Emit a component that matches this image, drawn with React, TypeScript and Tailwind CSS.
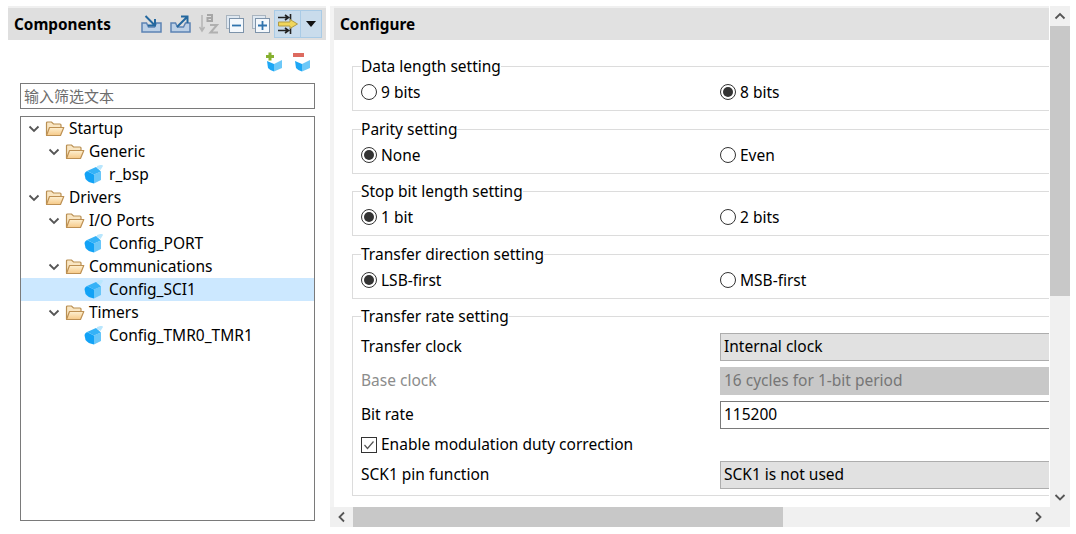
const sans = "font-['Noto_Sans','Noto_Sans_CJK_SC',sans-serif]";

function Chevron() {
  return (
    <svg width="12" height="12" viewBox="0 0 12 12" className="shrink-0">
      <path d="M1.5 3.5 L6 8 L10.5 3.5" fill="none" stroke="#555" strokeWidth="1.8" />
    </svg>
  );
}

function Folder() {
  return (
    <svg width="20" height="16" viewBox="0 0 20 16" className="shrink-0">
      <defs>
        <linearGradient id="folderFront" x1="0" y1="0" x2="0" y2="1">
          <stop offset="0" stopColor="#fdf0d2" />
          <stop offset="1" stopColor="#f6c987" />
        </linearGradient>
      </defs>
      <path d="M1.5 14 V2 Q1.5 1 2.5 1 H6.5 L8.5 3 H15 Q16 3 16 4 V6" fill="#f9e6c3" stroke="#b98f52" strokeWidth="1.2" />
      <path d="M1.5 14.5 L4.5 6.5 H18.8 L15.5 14.5 Z" fill="url(#folderFront)" stroke="#bd9053" strokeWidth="1.2" strokeLinejoin="round" />
    </svg>
  );
}

function Cube() {
  return (
    <svg width="20" height="20" viewBox="0 1 20 20" className="shrink-0">
      <path d="M0.5 10 Q1 8 3 7 L10 10.5 V19.5 Q4 18.5 1.5 15 Z" fill="#12a2f6" />
      <path d="M10 10.5 L17 7.5 V16 L10 19.5 Z" fill="#68c6f9" />
      <path d="M3 7 L12 3 L17 7.5 L10 10.5 Z" fill="#35b2f7" />
      <path d="M13 2 L18 0.5 L19 2 L16.5 6 L13 4 Z" fill="#b9e6fd" />
    </svg>
  );
}

function Tray({ up }: { up?: boolean }) {
  return (
    <svg width="21" height="18" viewBox="0 0 21 18" className="shrink-0">
      <path d="M1 8 V17 H20 V8 H15.5 L13.5 12 H7.5 L5.5 8 Z" fill="#bcd0e6" stroke="#5c83b4" strokeWidth="1.5" />
      {up ? (
        <path d="M7 12 L16.5 2.5 M11 1.5 H17.5 V8" fill="none" stroke="#24689f" strokeWidth="2" />
      ) : (
        <path d="M4.5 1 L13 9.5 M7 10.5 H14 V4" fill="none" stroke="#24689f" strokeWidth="2" />
      )}
    </svg>
  );
}

function SortAz() {
  return (
    <svg width="20" height="22" viewBox="0 0 20 22" className="shrink-0">
      <path d="M3 2 V17 M0.5 14 L3 18 L5.5 14" fill="none" stroke="#b5b5b5" strokeWidth="1.5" />
      <path d="M8 2 H13 V8 H8.5 V5 H13" fill="none" stroke="#a6a6a6" strokeWidth="2" />
      <path d="M11 12 H18 L11.5 19.5 H19" fill="none" stroke="#b0b0b0" strokeWidth="2" />
    </svg>
  );
}

function Stacked({ plus }: { plus?: boolean }) {
  return (
    <svg width="18" height="18" viewBox="0 0 18 18" className="shrink-0">
      <rect x="0.5" y="0.5" width="13" height="13" fill="#dfe8f1" stroke="#a9b4bf" />
      <rect x="3.5" y="3.5" width="14" height="14" fill="#f4f8fc" stroke="#7d93aa" />
      <path d={plus ? "M6 10.5 H15 M10.5 6 V15" : "M6 10.5 H15"} stroke="#2f73ad" strokeWidth="1.8" />
    </svg>
  );
}

function Sync() {
  return (
    <svg width="20" height="20" viewBox="0 0 20 20">
      <path d="M0 3.5 H10 M7 1 L10.5 3.5 L7 6 M12.5 0 V6" fill="none" stroke="#222" strokeWidth="1.6" />
      <path d="M0 16.5 H10 M7 14 L10.5 16.5 L7 19 M12.5 14 V20" fill="none" stroke="#222" strokeWidth="1.6" />
      <path d="M0.5 8 H12 V5.5 L19.5 10 L12 14.5 V12 H0.5 Z" fill="#f0d65a" stroke="#b09a45" strokeWidth="1" />
    </svg>
  );
}

function ComponentAction({ plus }: { plus?: boolean }) {
  return (
    <svg width="20" height="20" viewBox="0 0 20 20" className="shrink-0">
      <path d="M3 9 L10 12 V19.5 Q6 18.5 4 16 Z" fill="#1ea7f5" />
      <path d="M10 12 L18 8 V16 L10 19.5 Z" fill="#6cc8f8" />
      {plus ? (
        <path d="M6 0.5 V8.5 M2 4.5 H10" stroke="#86b02f" strokeWidth="3" />
      ) : (
        <rect x="1" y="1" width="11" height="4" fill="#dd6a5f" />
      )}
    </svg>
  );
}

type Row = { label: string; depth: number; kind: "folder" | "cube"; selected?: boolean };

const rows: Row[] = [
  { label: "Startup", depth: 0, kind: "folder" },
  { label: "Generic", depth: 1, kind: "folder" },
  { label: "r_bsp", depth: 2, kind: "cube" },
  { label: "Drivers", depth: 0, kind: "folder" },
  { label: "I/O Ports", depth: 1, kind: "folder" },
  { label: "Config_PORT", depth: 2, kind: "cube" },
  { label: "Communications", depth: 1, kind: "folder" },
  { label: "Config_SCI1", depth: 2, kind: "cube", selected: true },
  { label: "Timers", depth: 1, kind: "folder" },
  { label: "Config_TMR0_TMR1", depth: 2, kind: "cube" },
];

const depthClass = ["pl-[7px]", "pl-[27px]", "pl-[63px]"];

function TreeRow({ row }: { row: Row }) {
  return (
    <div className={`flex h-[23px] items-center ${depthClass[row.depth]} ${row.selected ? "bg-[#cce8ff]" : ""}`}>
      {row.kind === "folder" ? (
        <>
          <Chevron />
          <span className="ml-[5px]"><Folder /></span>
          <span className="ml-[4px]">{row.label}</span>
        </>
      ) : (
        <>
          <Cube />
          <span className="ml-[5px]">{row.label}</span>
        </>
      )}
    </div>
  );
}

function Radio({ label, checked }: { label: string; checked?: boolean }) {
  return (
    <div className="flex items-center">
      <span className="flex h-[16px] w-[16px] items-center justify-center rounded-full border border-[#333] bg-white">
        {checked && <span className="h-[10px] w-[10px] rounded-full bg-[#333]" />}
      </span>
      <span className="ml-[4px]">{label}</span>
    </div>
  );
}

function RadioGroup({ title, a, b, first, mt }: { title: string; a: string; b: string; first: boolean; mt: string }) {
  return (
    <fieldset className={`ml-[18px] h-[55px] w-[800px] border border-[#dcdcdc] pl-[8px] ${mt}`}>
      <legend className="leading-[21px]">{title}</legend>
      <div className="grid grid-cols-[359px_1fr] pt-[4px] leading-[22px]">
        <Radio label={a} checked={first} />
        <Radio label={b} checked={!first} />
      </div>
    </fieldset>
  );
}

function Field({ value, variant }: { value: string; variant: "select" | "disabled" | "input" }) {
  const cls = {
    select: "border-[#adadad] bg-[#e1e1e1] text-black",
    disabled: "border-[#c8c8c8] bg-[#c8c8c8] text-[#767676]",
    input: "border-[#7a7a7a] bg-white text-black",
  }[variant];
  return <div className={`flex h-[28px] items-center border pl-[3px] ${cls}`}>{value}</div>;
}

function Setting({ label, muted, children, mt }: { label: string; muted?: boolean; children: React.ReactNode; mt: string }) {
  return (
    <div className={`grid grid-cols-[359px_1fr] items-center ${mt}`}>
      <span className={muted ? "text-[#8c8c8c]" : ""}>{label}</span>
      {children}
    </div>
  );
}

function ArrowIcon({ d }: { d: string }) {
  return (
    <svg width="12" height="12" viewBox="0 0 12 12">
      <path d={d} fill="none" stroke="#555" strokeWidth="1.8" />
    </svg>
  );
}

export default function App() {
  return (
    <div className={`flex h-[534px] w-[1076px] overflow-hidden bg-white pl-[8px] text-[15.5px] text-black ${sans}`}>
      <div className="flex h-[528px] w-[318px] flex-col pt-[6px]">
        <div className="flex h-[34px] shrink-0 items-center border-t-2 border-[#f0f0f0] bg-[#dfdfdf] pl-[6px] pr-[4px]">
          <span className="text-[15.3px] font-bold">Components</span>
          <div className="ml-auto flex items-center">
            <div className="mr-[4px] flex w-[129px] items-center justify-between">
              <Tray />
              <Tray up />
              <SortAz />
              <Stacked />
              <Stacked plus />
            </div>
            <div className="flex h-[28px] items-center border border-[#a9cbe6] bg-[#c9dcec]">
              <span className="flex h-full w-[26px] items-center justify-center border-r border-[#a9cbe6]">
                <Sync />
              </span>
              <span className="flex w-[20px] justify-center">
                <svg width="10" height="6" viewBox="0 0 10 6"><path d="M0 0 H10 L5 6 Z" fill="#111" /></svg>
              </span>
            </div>
          </div>
        </div>
        <div className="flex justify-end gap-[8px] pr-[14px] pt-[12px]">
          <ComponentAction plus />
          <ComponentAction />
        </div>
        <div className="ml-[12px] mr-[11px] mt-[11px] flex h-[26px] items-center border border-[#7a7a7a] pl-[3px] text-[15px] text-[#6d6d6d]">输入筛选文本</div>
        <div className="ml-[12px] mr-[11px] mt-[7px] h-[405px] border border-[#7a7a7a]">
          {rows.map((r) => <TreeRow key={r.label} row={r} />)}
        </div>
      </div>

      <div className="ml-[4px] flex h-[527px] w-[740px] flex-col pt-[6px]">
        <div className="flex min-h-0 flex-1 border-l-4 border-[#f3f3f3]">
          <div className="flex w-[715px] flex-col overflow-hidden">
            <div className="flex h-[34px] shrink-0 items-center border-t-2 border-[#f0f0f0] bg-[#e1e1e1] pl-[6px] text-[15.3px] font-bold">Configure</div>
            <RadioGroup mt="mt-[16px]" title="Data length setting" a="9 bits" b="8 bits" first={false} />
            <RadioGroup mt="mt-[8px]" title="Parity setting" a="None" b="Even" first />
            <RadioGroup mt="mt-[7px]" title="Stop bit length setting" a="1 bit" b="2 bits" first />
            <RadioGroup mt="mt-[8px]" title="Transfer direction setting" a="LSB-first" b="MSB-first" first />
            <fieldset className="mt-[7px] ml-[18px] h-[190px] w-[800px] border border-[#dcdcdc] pl-[8px]">
              <legend className="leading-[21px]">Transfer rate setting</legend>
              <div className="pt-[6px]">
                <Setting mt="" label="Transfer clock"><Field variant="select" value="Internal clock" /></Setting>
                <Setting mt="mt-[6px]" label="Base clock" muted><Field variant="disabled" value="16 cycles for 1-bit period" /></Setting>
                <Setting mt="mt-[6px]" label="Bit rate"><Field variant="input" value="115200" /></Setting>
                <div className="mt-[5px] flex h-[22px] items-center">
                  <span className="flex h-[16px] w-[16px] items-center justify-center border border-[#333]">
                    <svg width="12" height="12" viewBox="0 0 12 12"><path d="M1.5 6 L4.5 9.5 L10.5 2.5" fill="none" stroke="#555" strokeWidth="1.2" /></svg>
                  </span>
                  <span className="ml-[4px]">Enable modulation duty correction</span>
                </div>
                <Setting mt="mt-[5px]" label="SCK1 pin function"><Field variant="select" value="SCK1 is not used" /></Setting>
              </div>
            </fieldset>
          </div>
          <div className="ml-px flex w-[20px] shrink-0 flex-col items-center bg-[#f0f0f0]">
            <div className="flex h-[20px] items-center justify-center"><ArrowIcon d="M1.5 8.5 L6 4 L10.5 8.5" /></div>
            <div className="h-[270px] w-full bg-[#c8c8c8]" />
            <div className="mt-auto flex h-[20px] items-center justify-center"><ArrowIcon d="M1.5 4 L6 8.5 L10.5 4" /></div>
          </div>
        </div>
        <div className="flex h-[20px] shrink-0 items-center bg-[#f0f0f0]">
          <div className="flex w-[23px] justify-center"><ArrowIcon d="M8 1.5 L3.5 6 L8 10.5" /></div>
          <div className="h-full w-[430px] bg-[#c8c8c8]" />
          <div className="ml-auto mr-[22px] flex w-[20px] justify-center"><ArrowIcon d="M4 1.5 L8.5 6 L4 10.5" /></div>
        </div>
      </div>
    </div>
  );
}
